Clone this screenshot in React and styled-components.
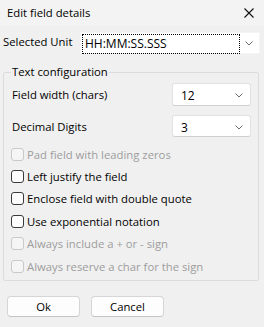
import React from 'react'
import styled, { createGlobalStyle } from 'styled-components'

const Global = createGlobalStyle`
  html, body { margin: 0; padding: 0; background: #f0f0f0; }
  * { box-sizing: border-box; }
`

const Window = styled.div`
  width: 264px;
  height: 327px;
  background: #f0f0f0;
  font-family: "Segoe UI", "Open Sans", "Noto Sans", sans-serif;
  font-size: 11.3px;
  line-height: 15px;
  color: #000;
  overflow: hidden;
`

const TitleBar = styled.div`
  height: 26px;
  display: flex;
  align-items: center;
  justify-content: space-between;
  padding: 0 10px 1px 7px;
  background: #f3f3f3;
`

const CloseIcon = styled.svg`
  width: 10px;
  height: 10px;
`

const Body = styled.div`
  padding: 6px 4px 0 3px;
`

const Row = styled.div`
  display: flex;
  align-items: center;
  justify-content: space-between;
`

const Combo = styled.div`
  width: ${p => p.$w}px;
  height: ${p => p.$h}px;
  background: #fff;
  border: 1px solid ${p => (p.$flat ? '#f4f4f4' : '#e2e2e2')};
  border-bottom-color: ${p => (p.$flat ? '#f4f4f4' : '#d0d0d0')};
  border-radius: ${p => (p.$flat ? 0 : 3)}px;
  display: flex;
  align-items: center;
  padding: ${p => (p.$flat ? '1px 0 0 2px' : '2px 0 0 8px')};
  gap: 6px;
  font-size: 12px;
`

const Focus = styled.div`
  flex: 1;
  height: 18px;
  outline: 1px dotted #000;
  display: flex;
  align-items: center;
  padding-left: 2px;
`

const ComboText = styled.span`
  flex: 1;
`

const Chevron = styled.svg`
  width: 8px;
  height: 5px;
  margin-right: ${p => p.$mr}px;
  flex: none;
`

const Group = styled.fieldset`
  margin: 11px 1px 0 0;
  padding: 0 7px 3px 7px;
  border: 1px solid #dcdcdc;
  border-radius: 2px;
`

const Legend = styled.legend`
  padding: 0 1px;
  margin-left: 0;
  line-height: 14px;
`

const FieldRow = styled(Row)`
  padding-left: 1px;
  margin-top: ${p => p.$mt}px;
`

const CheckList = styled.div`
  display: flex;
  flex-direction: column;
  margin-top: 6px;
`

const CheckRow = styled.label`
  height: 22.4px;
  display: flex;
  align-items: center;
  gap: 3px;
  color: ${p => (p.$disabled ? '#9d9d9d' : '#000')};
`

const Box = styled.span`
  width: 13px;
  height: 13px;
  border: 1px solid ${p => (p.$disabled ? '#c9c9c9' : '#3a3a3a')};
  border-radius: 3px;
  background: ${p => (p.$disabled ? '#f5f5f5' : '#fdfdfd')};
  flex: none;
`

const Buttons = styled.div`
  display: flex;
  gap: 11px;
  padding: 15px 0 0 4px;
`

const Button = styled.button`
  width: 73px;
  height: 21px;
  background: #fdfdfd;
  border: 1px solid #d6d6d6;
  border-bottom-color: #c4c4c4;
  border-radius: 4px;
  font-family: inherit;
  font-size: 11.3px;
  color: #000;
  padding: 0;
`

const Arrow = ({ mr }) => (
  <Chevron $mr={mr} viewBox="0 0 8 5">
    <path d="M0.5 0.5 L4 4 L7.5 0.5" fill="none" stroke="#6b6b6b" strokeWidth="1" />
  </Chevron>
)

const checks = [
  { label: 'Pad field with leading zeros', disabled: true },
  { label: 'Left justify the field' },
  { label: 'Enclose field with double quote' },
  { label: 'Use exponential notation' },
  { label: 'Always include a + or - sign', disabled: true },
  { label: 'Always reserve a char for the sign', disabled: true },
]

export default function App() {
  return (
    <Window>
      <Global />
      <TitleBar>
        <span>Edit field details</span>
        <CloseIcon viewBox="0 0 10 10">
          <path d="M0.5 0.5 L9.5 9.5 M9.5 0.5 L0.5 9.5" stroke="#111" strokeWidth="1.1" />
        </CloseIcon>
      </TitleBar>
      <Body>
        <Row>
          <span style={{ marginTop: -3 }}>Selected Unit</span>
          <Combo $w={180} $h={22} $flat>
            <Focus>HH:MM:SS.SSS</Focus>
            <Arrow mr={6} />
          </Combo>
        </Row>
        <Group>
          <Legend>Text configuration</Legend>
          <FieldRow $mt={4}>
            <span>Field width (chars)</span>
            <Combo $w={79} $h={23}>
              <ComboText>12</ComboText>
              <Arrow mr={7} />
            </Combo>
          </FieldRow>
          <FieldRow $mt={9}>
            <span>Decimal Digits</span>
            <Combo $w={79} $h={22}>
              <ComboText>3</ComboText>
              <Arrow mr={7} />
            </Combo>
          </FieldRow>
          <CheckList>
            {checks.map(c => (
              <CheckRow key={c.label} $disabled={c.disabled}>
                <Box $disabled={c.disabled} />
                {c.label}
              </CheckRow>
            ))}
          </CheckList>
        </Group>
        <Buttons>
          <Button>Ok</Button>
          <Button>Cancel</Button>
        </Buttons>
      </Body>
    </Window>
  )
}
